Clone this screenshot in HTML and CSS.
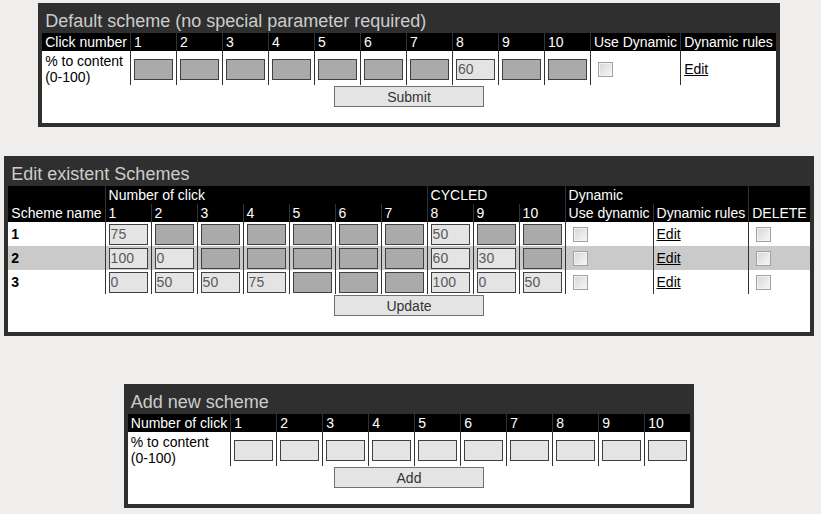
FILE: index.html
```html
<!DOCTYPE html>
<html lang="en">
  <head>
    <meta charset="UTF-8" />
    <meta name="viewport" content="width=device-width, initial-scale=1.0" />
    <title>Click schemes</title>

    <link rel="stylesheet" href="styles.css">
  </head>
  <body>
    <div class="panel first">
      <h2>Default scheme (no special parameter required)</h2>
      <form class="sheet">
        <table class="grid">
          <tr class="head">
            <th>Click number</th>
            <th>1</th><th>2</th><th>3</th><th>4</th><th>5</th>
            <th>6</th><th>7</th><th>8</th><th>9</th><th>10</th>
            <th>Use Dynamic</th>
            <th>Dynamic rules</th>
          </tr>
          <tr class="tall">
            <td>% to content (0-100)</td>
            <td><input class="field empty" type="text"></td>
            <td><input class="field empty" type="text"></td>
            <td><input class="field empty" type="text"></td>
            <td><input class="field empty" type="text"></td>
            <td><input class="field empty" type="text"></td>
            <td><input class="field empty" type="text"></td>
            <td><input class="field empty" type="text"></td>
            <td><input class="field" type="text" value="60"></td>
            <td><input class="field empty" type="text"></td>
            <td><input class="field empty" type="text"></td>
            <td><input class="check" type="checkbox"></td>
            <td><a href="#">Edit</a></td>
          </tr>
        </table>
        <div class="actions"><input class="btn" type="submit" value="Submit"></div>
      </form>
    </div>

    <div class="panel second">
      <h2>Edit existent Schemes</h2>
      <form class="sheet">
        <table class="grid">
          <tr class="head">
            <th></th>
            <th colspan="7">Number of click</th>
            <th colspan="3">CYCLED</th>
            <th colspan="2">Dynamic</th>
            <th></th>
          </tr>
          <tr class="head">
            <th>Scheme name</th>
            <th>1</th><th>2</th><th>3</th><th>4</th><th>5</th>
            <th>6</th><th>7</th><th>8</th><th>9</th><th>10</th>
            <th>Use dynamic</th>
            <th>Dynamic rules</th>
            <th>DELETE</th>
          </tr>
          <tr class="row">
            <td class="name">1</td>
            <td><input class="field" type="text" value="75"></td>
            <td><input class="field empty" type="text"></td>
            <td><input class="field empty" type="text"></td>
            <td><input class="field empty" type="text"></td>
            <td><input class="field empty" type="text"></td>
            <td><input class="field empty" type="text"></td>
            <td><input class="field empty" type="text"></td>
            <td><input class="field" type="text" value="50"></td>
            <td><input class="field empty" type="text"></td>
            <td><input class="field empty" type="text"></td>
            <td><input class="check" type="checkbox"></td>
            <td><a href="#">Edit</a></td>
            <td><input class="check" type="checkbox"></td>
          </tr>
          <tr class="row alt">
            <td class="name">2</td>
            <td><input class="field" type="text" value="100"></td>
            <td><input class="field" type="text" value="0"></td>
            <td><input class="field empty" type="text"></td>
            <td><input class="field empty" type="text"></td>
            <td><input class="field empty" type="text"></td>
            <td><input class="field empty" type="text"></td>
            <td><input class="field empty" type="text"></td>
            <td><input class="field" type="text" value="60"></td>
            <td><input class="field" type="text" value="30"></td>
            <td><input class="field empty" type="text"></td>
            <td><input class="check" type="checkbox"></td>
            <td><a href="#">Edit</a></td>
            <td><input class="check" type="checkbox"></td>
          </tr>
          <tr class="row">
            <td class="name">3</td>
            <td><input class="field" type="text" value="0"></td>
            <td><input class="field" type="text" value="50"></td>
            <td><input class="field" type="text" value="50"></td>
            <td><input class="field" type="text" value="75"></td>
            <td><input class="field empty" type="text"></td>
            <td><input class="field empty" type="text"></td>
            <td><input class="field empty" type="text"></td>
            <td><input class="field" type="text" value="100"></td>
            <td><input class="field" type="text" value="0"></td>
            <td><input class="field" type="text" value="50"></td>
            <td><input class="check" type="checkbox"></td>
            <td><a href="#">Edit</a></td>
            <td><input class="check" type="checkbox"></td>
          </tr>
        </table>
        <div class="actions"><input class="btn" type="submit" value="Update"></div>
      </form>
    </div>

    <div class="panel">
      <h2>Add new scheme</h2>
      <form class="sheet">
        <table class="grid">
          <tr class="head">
            <th>Number of click</th>
            <th>1</th><th>2</th><th>3</th><th>4</th><th>5</th>
            <th>6</th><th>7</th><th>8</th><th>9</th><th>10</th>
          </tr>
          <tr class="tall">
            <td>% to content (0-100)</td>
            <td><input class="field" type="text"></td>
            <td><input class="field" type="text"></td>
            <td><input class="field" type="text"></td>
            <td><input class="field" type="text"></td>
            <td><input class="field" type="text"></td>
            <td><input class="field" type="text"></td>
            <td><input class="field" type="text"></td>
            <td><input class="field" type="text"></td>
            <td><input class="field" type="text"></td>
            <td><input class="field" type="text"></td>
          </tr>
        </table>
        <div class="actions"><input class="btn" type="submit" value="Add"></div>
      </form>
    </div>
  </body>
</html>
```

FILE: styles.css
```css
body {
  margin: 0;
  padding: 3px 3px 0 0;
  background: #f0eeed;
  font-family: "Liberation Sans", Arial, sans-serif;
  font-size: 14px;
}

.panel {
  width: fit-content;
  margin: 0 auto;
  padding: 0 4px 4px;
  background: #2f2f2f;
}

.panel.first {
  margin-bottom: 29px;
}

.panel.second {
  margin-bottom: 48px;
}

.panel h2 {
  margin: 0;
  height: 30px;
  box-sizing: border-box;
  padding: 6px 3px 0;
  font-size: 18px;
  font-weight: normal;
  line-height: 24px;
  color: #cccccc;
}

.sheet {
  margin: 0;
  background: #fff;
}

.grid {
  border-collapse: collapse;
}

.grid th,
.grid td {
  padding: 0 3px;
  text-align: left;
  vertical-align: middle;
  white-space: nowrap;
}

.grid th + th,
.grid td + td {
  border-left: 1px solid #333;
}

.head th {
  height: 18px;
  background: #000;
  color: #fff;
  font-weight: normal;
  line-height: 18px;
}

.tall td {
  height: 32px;
  padding-top: 2px;
  line-height: 16px;
}

.tall td:first-child {
  width: 1px;
  white-space: normal;
}

.row td {
  height: 24px;
}

.row.alt td {
  background: #cacaca;
}

.name {
  font-weight: bold;
}

.field {
  display: block;
  box-sizing: border-box;
  width: 39px;
  height: 21px;
  margin: 0;
  padding: 0 1px;
  border: 1px solid #404040;
  background: #e4e4e4;
  color: #5a5a5a;
  font-family: inherit;
  font-size: 14px;
}

.field.empty {
  background: #aaaaaa;
}

.check {
  -webkit-appearance: none;
  appearance: none;
  display: block;
  width: 15px;
  height: 15px;
  margin: 3px 3px 3px 4px;
  border: 1px solid #a2a2a2;
  background: linear-gradient(135deg, #d6d6d6, #f7f7f7);
  box-shadow: inset 0 0 0 1px #f2f2f2;
}

.grid a {
  color: #000;
  text-decoration: underline;
}

.actions {
  padding: 1px 0 16px;
  text-align: center;
}

.btn {
  display: inline-block;
  vertical-align: top;
  width: 150px;
  height: 21px;
  margin: 0;
  padding: 0;
  border: 1px solid #707070;
  background: #e4e4e4;
  color: #333;
  font-family: inherit;
  font-size: 14px;
}
```
